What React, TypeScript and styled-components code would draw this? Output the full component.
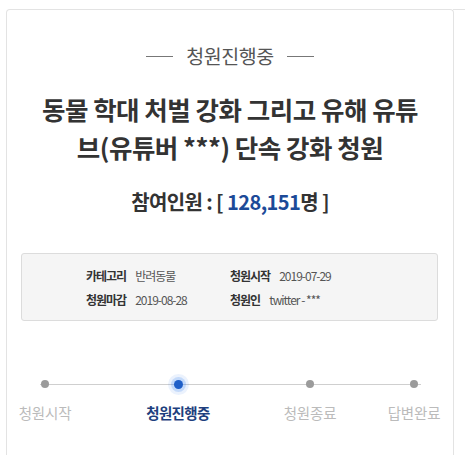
import React from "react";
import styled, { createGlobalStyle } from "styled-components";

const Global = createGlobalStyle`
  html, body { margin: 0; padding: 0; background: #fff; }
  body {
    font-family: "Noto Sans CJK KR", "Noto Sans", sans-serif;
    color: #333;
    overflow: hidden;
  }
`;

const Page = styled.div`
  padding: 9px 11px 0 6px;
  height: 455px;
  box-sizing: border-box;
`;

const Card = styled.section`
  position: relative;
  border: 1px solid #e3e3e3;
  border-bottom: none;
  border-radius: 4px 4px 0 0;
  height: 460px;
  box-sizing: border-box;
  padding-top: 34px;
  &::after {
    content: "";
    position: absolute;
    top: -1px;
    right: -12px;
    width: 12px;
    height: 1px;
    background: #e3e3e3;
  }
`;

const Status = styled.div`
  display: flex;
  justify-content: center;
  align-items: center;
  gap: 13px;
  font-size: 19.5px;
  line-height: 24px;
  color: #555;
  letter-spacing: -0.4px;
  &::before, &::after {
    content: "";
    width: 27px;
    height: 1px;
    background: #777;
  }
`;

const Title = styled.h1`
  margin: 22px 0 0;
  text-align: center;
  font-size: 25.5px;
  line-height: 38px;
  font-weight: 700;
  letter-spacing: -0.5px;
  color: #333;
`;

const Count = styled.div`
  margin-top: 21px;
  text-align: center;
  font-size: 20px;
  line-height: 30px;
  font-weight: 700;
  letter-spacing: -0.6px;
  color: #333;
`;

const Num = styled.span`
  color: #1c4a98;
`;

const InfoBox = styled.div`
  margin: 36px 15px 0 14px;
  background: #f5f5f5;
  border: 1px solid #dcdcdc;
  border-radius: 3px;
  padding: 10px 0 8px 64px;
  display: grid;
  grid-template-columns: 144px 1fr;
`;

const InfoItem = styled.div`
  display: flex;
  gap: 9px;
  font-size: 12px;
  line-height: 24px;
  letter-spacing: -1px;
`;

const InfoLabel = styled.span`
  font-weight: 700;
  color: #333;
`;

const InfoValue = styled.span`
  color: #555;
`;

const Stepper = styled.ol`
  position: relative;
  list-style: none;
  margin: 53px 0 0 3px;
  padding: 0;
  display: grid;
  grid-template-columns: 133px 132px 104px 70px;
  &::before {
    content: "";
    position: absolute;
    top: 10px;
    left: 30px;
    width: 381px;
    height: 1px;
    background: #cfcfcf;
  }
`;

const Step = styled.li`
  width: 70px;
  display: flex;
  flex-direction: column;
  align-items: center;
  gap: 9px;
`;

const DotWrap = styled.div`
  position: relative;
  height: 20px;
  display: flex;
  align-items: center;
  justify-content: center;
`;

const Dot = styled.span<{ $active?: boolean }>`
  display: block;
  width: ${(p) => (p.$active ? 9 : 8)}px;
  height: ${(p) => (p.$active ? 9 : 8)}px;
  border-radius: 50%;
  background: ${(p) => (p.$active ? "#1f5fc8" : "#9b9b9b")};
  box-shadow: ${(p) =>
    p.$active
      ? "0 0 0 3px rgba(60,130,240,0.22), 0 0 0 6px rgba(60,130,240,0.1)"
      : "none"};
`;

const StepLabel = styled.span<{ $active?: boolean }>`
  font-size: 14.5px;
  line-height: 20px;
  white-space: nowrap;
  letter-spacing: ${(p) => (p.$active ? "-0.6px" : "-0.2px")};
  font-weight: ${(p) => (p.$active ? 700 : 400)};
  color: ${(p) => (p.$active ? "#1e3f7e" : "#bbbbbb")};
`;

const steps = [
  { label: "청원시작" },
  { label: "청원진행중", active: true },
  { label: "청원종료" },
  { label: "답변완료" },
];

export default function App() {
  return (
    <>
      <Global />
      <Page>
        <Card>
          <Status>청원진행중</Status>
          <Title>
            동물 학대 처벌 강화 그리고 유해 유튜
            <br />
            브(유튜버 ***) 단속 강화 청원
          </Title>
          <Count>
            참여인원 : [ <Num>128,151</Num>명 ]
          </Count>
          <InfoBox>
            <InfoItem>
              <InfoLabel>카테고리</InfoLabel>
              <InfoValue>반려동물</InfoValue>
            </InfoItem>
            <InfoItem>
              <InfoLabel>청원시작</InfoLabel>
              <InfoValue>2019-07-29</InfoValue>
            </InfoItem>
            <InfoItem>
              <InfoLabel>청원마감</InfoLabel>
              <InfoValue>2019-08-28</InfoValue>
            </InfoItem>
            <InfoItem>
              <InfoLabel>청원인</InfoLabel>
              <InfoValue>twitter - ***</InfoValue>
            </InfoItem>
          </InfoBox>
          <Stepper>
            {steps.map((s) => (
              <Step key={s.label}>
                <DotWrap>
                  <Dot $active={s.active} />
                </DotWrap>
                <StepLabel $active={s.active}>{s.label}</StepLabel>
              </Step>
            ))}
          </Stepper>
        </Card>
      </Page>
    </>
  );
}
